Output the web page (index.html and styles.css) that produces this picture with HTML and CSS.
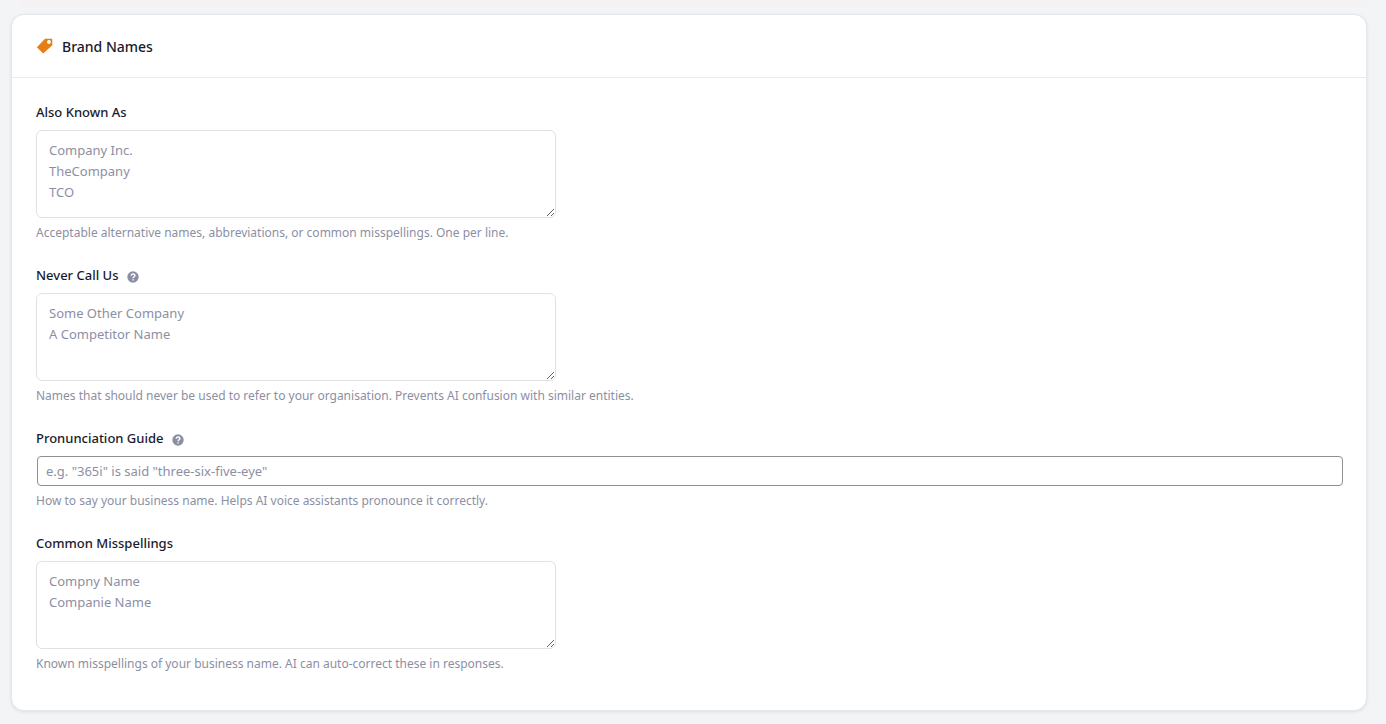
FILE: index.html
```html
<!DOCTYPE html>
<html lang="en">
<head>
  <meta charset="UTF-8" />
  <meta name="viewport" content="width=device-width, initial-scale=1.0"/>
  <title>Brand Names</title>
  <link rel="stylesheet" href="styles.css">
</head>
<body>

  <div class="strip"></div>

  <section class="card">
    <header class="card-header">
      <svg class="tag-icon" viewBox="0 0 18 18" aria-hidden="true">
        <path fill-rule="evenodd" d="M9 1.800H15.400Q16.300 1.800 16.300 2.700V8.200L7.200 16.400 .9 10.200ZM12.900 3.100a1.900 1.900 0 1 0 .1 0Z"/>
      </svg>
      <h2>Brand Names</h2>
    </header>

    <form class="card-body">
      <div class="field">
        <div class="field-label">
          <label for="aliases">Also Known As</label>
        </div>
        <textarea id="aliases" rows="3" placeholder="Company Inc.&#10;TheCompany&#10;TCO"></textarea>
        <p class="help">Acceptable alternative names, abbreviations, or common misspellings. One per line.</p>
      </div>

      <div class="field">
        <div class="field-label">
          <label for="never">Never Call Us</label>
          <svg class="help-icon" viewBox="0 0 12 12" aria-hidden="true">
            <circle cx="6" cy="6" r="5.700"/>
            <path d="M4.200 4.800C4.200 2.400 7.900 2.500 7.900 4.500 7.900 5.700 6.100 5.800 6.100 7.300M6.100 8.300V9.600"/>
          </svg>
        </div>
        <textarea id="never" rows="3" placeholder="Some Other Company&#10;A Competitor Name"></textarea>
        <p class="help">Names that should never be used to refer to your organisation. Prevents AI confusion with similar entities.</p>
      </div>

      <div class="field">
        <div class="field-label">
          <label for="pronunciation">Pronunciation Guide</label>
          <svg class="help-icon" viewBox="0 0 12 12" aria-hidden="true">
            <circle cx="6" cy="6" r="5.700"/>
            <path d="M4.200 4.800C4.200 2.400 7.900 2.500 7.900 4.500 7.900 5.700 6.100 5.800 6.100 7.300M6.100 8.300V9.600"/>
          </svg>
        </div>
        <input type="text" id="pronunciation" placeholder="e.g. &quot;365i&quot; is said &quot;three-six-five-eye&quot;" />
        <p class="help">How to say your business name. Helps AI voice assistants pronounce it correctly.</p>
      </div>

      <div class="field">
        <div class="field-label">
          <label for="misspellings">Common Misspellings</label>
        </div>
        <textarea id="misspellings" rows="3" placeholder="Compny Name&#10;Companie Name"></textarea>
        <p class="help">Known misspellings of your business name. AI can auto-correct these in responses.</p>
      </div>
    </form>
  </section>

</body>
</html>
```
FILE: styles.css
```css
* {
  box-sizing: border-box;
}

body {
  margin: 0;
  padding: 0 20px 12px 12px;
  background: #f3f4f6;
  font-family: 'Segoe UI', 'Noto Sans', sans-serif;
  font-size: 13px;
  color: #1a1a2e;
}

.strip {
  height: 7px;
  margin: 0 0 8px 8px;
  background: #f4f2f3;
}

.card {
  background: white;
  border-radius: 12px;
  box-shadow: 0 0 0 1px #e5e7eb, 0 1px 4px rgba(0, 0, 0, 0.14);
}

.card-header {
  display: flex;
  align-items: center;
  gap: 8px;
  height: 63px;
  padding: 0 24px;
  border-bottom: 1px solid #e8ecef;
}

.card-header h2 {
  margin: 0;
  font-size: 14px;
  font-weight: 500;
  line-height: 21px;
}

.tag-icon {
  width: 18px;
  height: 18px;
  fill: #e67e17;
}

.card-body {
  padding: 24px 24px 14px;
}

.field {
  margin-bottom: 23px;
}

.field-label {
  display: flex;
  align-items: center;
  gap: 8px;
  margin-bottom: 8px;
  font-weight: 500;
  line-height: 20px;
}

.help-icon {
  width: 12px;
  height: 12px;
  margin-top: 4px;
  fill: #8c8fa3;
}

.help-icon path {
  fill: none;
  stroke: white;
  stroke-width: 1.4;
}

textarea {
  display: block;
  width: 100%;
  max-width: 520px;
  height: 88px;
  padding: 9px 12px;
  border: 1px solid #dfe1e5;
  border-radius: 6px;
  font-family: inherit;
  font-size: 13px;
  line-height: 21px;
  color: inherit;
  resize: vertical;
}

input {
  display: block;
  width: 100%;
  height: 30px;
  margin: 0 1px;
  padding: 0 8px;
  border: 1px solid #8c8f94;
  border-radius: 4px;
  font-family: inherit;
  font-size: 13px;
  color: inherit;
}

textarea::placeholder,
input::placeholder {
  color: #8c8fa3;
}

.help {
  margin: 5px 0 0;
  font-size: 12px;
  line-height: 19px;
  color: #8c8fa3;
}
```
